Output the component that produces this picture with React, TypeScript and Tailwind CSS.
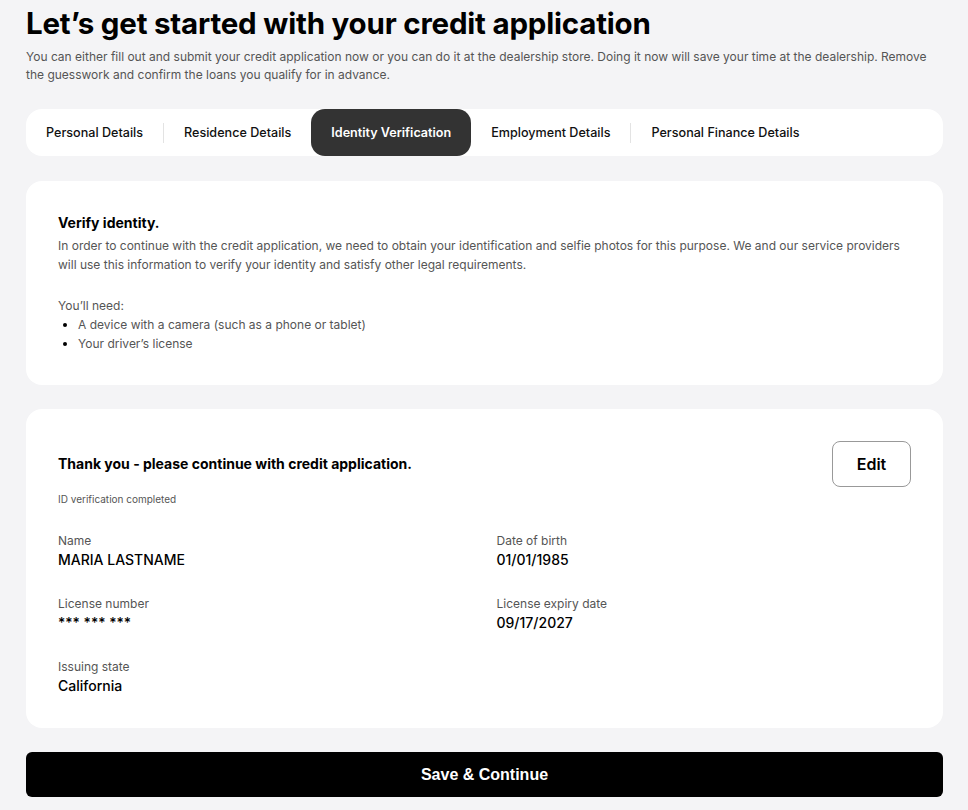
const tabs = [
  { label: 'Personal Details' },
  { label: 'Residence Details' },
  { label: 'Identity Verification', active: true },
  { label: 'Employment Details' },
  { label: 'Personal Finance Details' },
];

const fields = [
  { label: 'Name', value: 'MARIA LASTNAME' },
  { label: 'Date of birth', value: '01/01/1985' },
  { label: 'License number', value: '*** *** ***' },
  { label: 'License expiry date', value: '09/17/2027' },
  { label: 'Issuing state', value: 'California' },
];

const App = () => {
  return (
    <div className="min-h-screen w-full bg-[#f4f4f6] pl-[26px] pr-[25px] pb-3 font-['Inter',sans-serif] text-black">
      <h1 className="pt-[3px] text-[29.5px] font-bold leading-[40px] tracking-[-0.2px]">
        Let’s get started with your credit application
      </h1>
      <p className="mt-[5px] text-[12px] leading-[18px] text-[#555]">
        You can either fill out and submit your credit application now or you can do it at the dealership store. Doing it now
        will save your time at the dealership. Remove the guesswork and confirm the loans you qualify for in advance.
      </p>

      <nav className="mt-[25px] flex h-[47px] items-center rounded-2xl bg-white">
        {tabs.map((tab, i) => {
          const prev = tabs[i - 1];
          const showSep = i > 0 && !tab.active && !prev?.active;
          return (
            <div key={tab.label} className="flex h-full items-center">
              {showSep && <span className="h-[20px] w-px bg-[#e3e3e3]" />}
              <span
                className={
                  tab.active
                    ? 'flex h-full items-center rounded-[14px] bg-[#333] px-5 pt-px text-[12.6px] font-semibold text-white'
                    : 'flex h-full items-center px-5 pt-px text-[12.6px] font-medium text-[#111]'
                }
              >
                {tab.label}
              </span>
            </div>
          );
        })}
      </nav>

      <section className="mt-[25px] rounded-2xl bg-white px-8 pt-[32px] pb-[32px]">
        <h2 className="text-[14px] font-bold leading-[20px]">Verify identity.</h2>
        <p className="mt-[3px] text-[12px] leading-[19px] text-[#555]">
          In order to continue with the credit application, we need to obtain your identification and selfie photos for this
          purpose. We and our service providers will use this information to verify your identity and satisfy other legal
          requirements.
        </p>
        <p className="mt-[22px] text-[12px] leading-[19px] text-[#555]">You’ll need:</p>
        <ul className="list-disc pl-5 text-[12px] leading-[19px] text-[#555] marker:text-black">
          <li>A device with a camera (such as a phone or tablet)</li>
          <li>Your driver’s license</li>
        </ul>
      </section>

      <section className="mt-[24px] rounded-2xl bg-white px-8 pt-8 pb-8">
        <div className="flex items-start justify-between">
          <div className="pt-[13px]">
            <h2 className="text-[14px] font-bold leading-[20px]">Thank you - please continue with credit application.</h2>
            <p className="mt-[18px] text-[10px] leading-[14px] text-[#555]">ID verification completed</p>
          </div>
          <button className="h-[46px] w-[79px] rounded-lg border border-[#999] bg-white text-[16px] font-semibold">
            Edit
          </button>
        </div>

        <div className="mt-[26px] grid grid-cols-2 gap-x-6 gap-y-[25px]">
          {fields.map((f) => (
            <div key={f.label}>
              <div className="text-[12px] leading-[18px] text-[#555]">{f.label}</div>
              <div className="text-[14px] font-medium leading-[20px]">{f.value}</div>
            </div>
          ))}
        </div>
      </section>

      <button className="mt-[24px] flex h-[45px] w-full items-center justify-center rounded-md bg-black font-['Liberation_Sans',sans-serif] text-[16px] font-bold text-white">
        Save &amp; Continue
      </button>
    </div>
  );
};

export default App;
